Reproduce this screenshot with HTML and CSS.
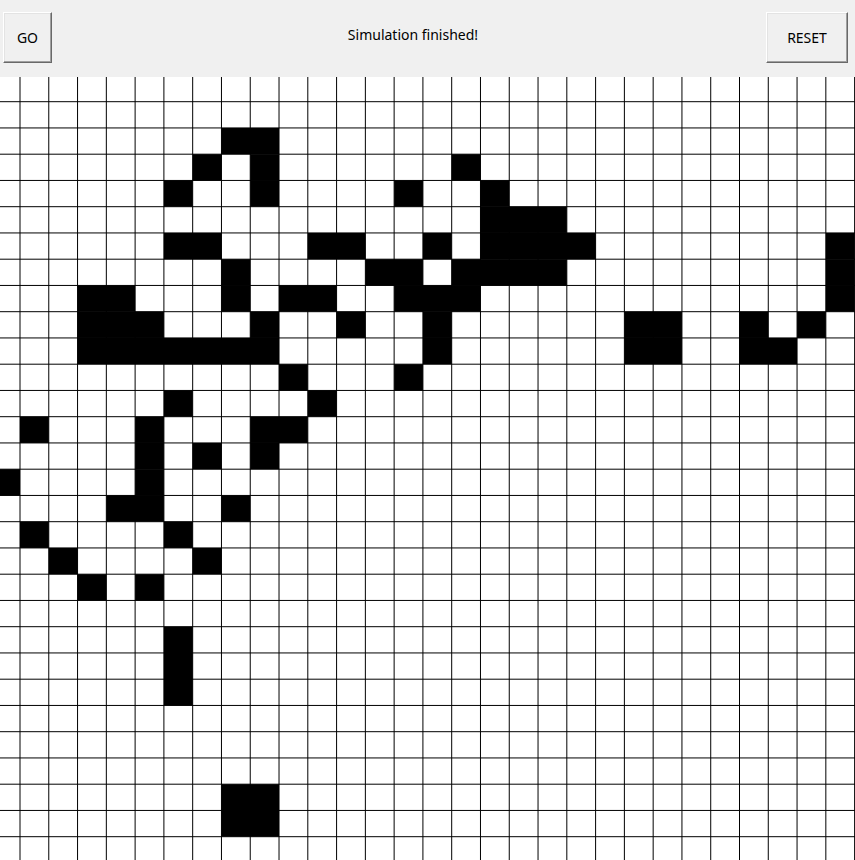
FILE: index.html
```html
<!DOCTYPE html>
<html>
<head>
<meta charset="utf-8">
<title>Simulation</title>
<link rel="stylesheet" href="styles.css">
</head>
<body>
<div class="app">
  <div class="toolbar">
    <button class="btn btn-go">GO</button>
    <div class="status">Simulation finished!</div>
    <button class="btn btn-reset">RESET</button>
  </div>
  <div class="board">
    <svg class="board-svg" width="855" height="783" viewBox="0 0 855 783">
      <g transform="translate(-8.78,-1.55) scale(28.78,26.25)">
        <g class="cells">
          <rect x="8" y="2" width="2" height="1"/>
          <rect x="7" y="3" width="1" height="1"/><rect x="9" y="3" width="1" height="1"/><rect x="16" y="3" width="1" height="1"/>
          <rect x="6" y="4" width="1" height="1"/><rect x="9" y="4" width="1" height="1"/><rect x="14" y="4" width="1" height="1"/><rect x="17" y="4" width="1" height="1"/>
          <rect x="17" y="5" width="3" height="1"/>
          <rect x="6" y="6" width="2" height="1"/><rect x="11" y="6" width="2" height="1"/><rect x="15" y="6" width="1" height="1"/><rect x="17" y="6" width="4" height="1"/><rect x="29" y="6" width="1" height="1"/>
          <rect x="8" y="7" width="1" height="1"/><rect x="13" y="7" width="2" height="1"/><rect x="16" y="7" width="4" height="1"/><rect x="29" y="7" width="1" height="1"/>
          <rect x="3" y="8" width="2" height="1"/><rect x="8" y="8" width="1" height="1"/><rect x="10" y="8" width="2" height="1"/><rect x="14" y="8" width="3" height="1"/><rect x="29" y="8" width="1" height="1"/>
          <rect x="3" y="9" width="3" height="1"/><rect x="9" y="9" width="1" height="1"/><rect x="12" y="9" width="1" height="1"/><rect x="15" y="9" width="1" height="1"/><rect x="22" y="9" width="2" height="1"/><rect x="26" y="9" width="1" height="1"/><rect x="28" y="9" width="1" height="1"/>
          <rect x="3" y="10" width="7" height="1"/><rect x="15" y="10" width="1" height="1"/><rect x="22" y="10" width="2" height="1"/><rect x="26" y="10" width="2" height="1"/>
          <rect x="10" y="11" width="1" height="1"/><rect x="14" y="11" width="1" height="1"/>
          <rect x="6" y="12" width="1" height="1"/><rect x="11" y="12" width="1" height="1"/>
          <rect x="1" y="13" width="1" height="1"/><rect x="5" y="13" width="1" height="1"/><rect x="9" y="13" width="2" height="1"/>
          <rect x="5" y="14" width="1" height="1"/><rect x="7" y="14" width="1" height="1"/><rect x="9" y="14" width="1" height="1"/>
          <rect x="0" y="15" width="1" height="1"/><rect x="5" y="15" width="1" height="1"/>
          <rect x="4" y="16" width="2" height="1"/><rect x="8" y="16" width="1" height="1"/>
          <rect x="1" y="17" width="1" height="1"/><rect x="6" y="17" width="1" height="1"/>
          <rect x="2" y="18" width="1" height="1"/><rect x="7" y="18" width="1" height="1"/>
          <rect x="3" y="19" width="1" height="1"/><rect x="5" y="19" width="1" height="1"/>
          <rect x="6" y="21" width="1" height="3"/>
          <rect x="8" y="27" width="2" height="2"/>
        </g>
        <path class="gridlines" vector-effect="non-scaling-stroke" d="M1 0V31M2 0V31M3 0V31M4 0V31M5 0V31M6 0V31M7 0V31M8 0V31M9 0V31M10 0V31M11 0V31M12 0V31M13 0V31M14 0V31M15 0V31M16 0V31M17 0V31M18 0V31M19 0V31M20 0V31M21 0V31M22 0V31M23 0V31M24 0V31M25 0V31M26 0V31M27 0V31M28 0V31M29 0V31M30 0V31M0 1H31M0 2H31M0 3H31M0 4H31M0 5H31M0 6H31M0 7H31M0 8H31M0 9H31M0 10H31M0 11H31M0 12H31M0 13H31M0 14H31M0 15H31M0 16H31M0 17H31M0 18H31M0 19H31M0 20H31M0 21H31M0 22H31M0 23H31M0 24H31M0 25H31M0 26H31M0 27H31M0 28H31M0 29H31M0 30H31"/>
      </g>
    </svg>
  </div>
</div>
</body>
</html>
```

FILE: styles.css
```css
html, body {
  margin: 0;
  padding: 0;
  background: #ffffff;
  overflow: hidden;
}

.app {
  width: 855px;
  height: 860px;
  display: flex;
  flex-direction: column;
}

.toolbar {
  height: 77px;
  flex: 0 0 77px;
  background: #f0f0f0;
  display: flex;
  align-items: flex-start;
  padding: 12px 7px 0 3px;
  box-sizing: border-box;
  font-family: "Noto Sans", "Open Sans", sans-serif;
  font-size: 14px;
  color: #000;
}

.btn {
  font-family: inherit;
  font-size: inherit;
  color: #000;
  background: #f0f0f0;
  height: 51px;
  padding: 0;
  margin: 0;
  border-style: solid;
  border-width: 1px;
  border-color: #ffffff #696969 #696969 #ffffff;
  box-shadow: inset -1px -1px 0 #a0a0a0, inset 1px 1px 0 #e3e3e3;
  box-sizing: border-box;
}

.btn-go {
  width: 49px;
}

.btn-reset {
  width: 82px;
}

.status {
  flex: 1;
  text-align: center;
  padding-top: 13px;
  padding-left: 8px;
  line-height: 19px;
}

.board {
  flex: 1;
  background: #ffffff;
  overflow: hidden;
}

.board-svg {
  display: block;
}

.cells rect {
  fill: #000;
}

.gridlines {
  fill: none;
  stroke: #000;
  stroke-width: 1;
}
```
